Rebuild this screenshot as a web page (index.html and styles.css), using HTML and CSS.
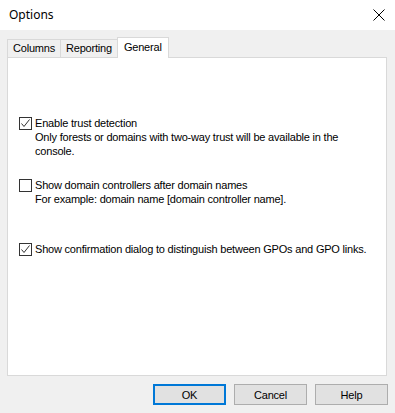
FILE: index.html
```html
<!DOCTYPE html>
<html lang="en">
<head>
    <meta charset="UTF-8">
    <title>Options</title>
    <link rel="stylesheet" href="styles.css">
</head>
<body>
<div class="dialog">
    <!-- title bar -->
    <div class="titlebar">
        <span class="title">Options</span>
        <svg class="close" width="12" height="12" viewBox="0 0 12 12">
            <path d="M0.5 0.5 L11.5 11.5 M11.5 0.5 L0.5 11.5" stroke="#000" stroke-width="1" fill="none"/>
        </svg>
    </div>

    <!-- tabs -->
    <div class="tabs">
        <div class="tab">Columns</div>
        <div class="tab">Reporting</div>
        <div class="tab active">General</div>
    </div>

    <div class="panel">
        <div class="option first">
            <span class="check checked">
                <svg width="11" height="11" viewBox="0 0 11 11"><path d="M1.5 5.5 L4 8.5 L9.5 1.5" stroke="#333" stroke-width="1" fill="none"/></svg>
            </span>
            <div class="label">
                Enable trust detection<br>
                Only forests or domains with two-way trust will be available in the console.
            </div>
        </div>
        <div class="option second">
            <span class="check"></span>
            <div class="label">
                Show domain controllers after domain names<br>
                For example: domain name [domain controller name].
            </div>
        </div>
        <div class="option third">
            <span class="check checked">
                <svg width="11" height="11" viewBox="0 0 11 11"><path d="M1.5 5.5 L4 8.5 L9.5 1.5" stroke="#333" stroke-width="1" fill="none"/></svg>
            </span>
            <div class="label">Show confirmation dialog to distinguish between GPOs and GPO links.</div>
        </div>
    </div>

    <!-- buttons -->
    <div class="buttons">
        <button class="default">OK</button>
        <button>Cancel</button>
        <button>Help</button>
    </div>
</div>
</body>
</html>
```

FILE: styles.css
```css
body {
    margin: 0;
    background-color: #f0f0f0;
    font-family: "Liberation Sans", Arial, sans-serif;
    font-size: 11px;
    letter-spacing: -0.2px;
    color: #000;
}
.dialog {
    width: 395px;
    height: 413px;
}
.titlebar {
    height: 30px;
    background-color: #fff;
    display: flex;
    align-items: center;
    justify-content: space-between;
    padding: 0 10px 0 9px;
    letter-spacing: 0;
}
.title {
    font-family: "Noto Sans", "Open Sans", sans-serif;
    font-size: 12px;
    margin-top: -1px;
}
.close {
    margin-top: -1px;
}
.tabs {
    display: flex;
    align-items: flex-end;
    height: 20px;
    margin-top: 7px;
    padding-left: 7px;
}
.tab {
    height: 17px;
    line-height: 17px;
    padding: 0 5px;
    border: 1px solid #d9d9d9;
    border-bottom: none;
    background-color: #f0f0f0;
    margin-left: -1px;
}
.tab:first-child {
    margin-left: 0;
}
.tab.active {
    height: 20px;
    line-height: 18px;
    background-color: #fff;
    padding: 0 6px;
    position: relative;
    z-index: 1;
    margin-bottom: -1px;
}
.panel {
    margin-left: 7px;
    width: 378px;
    height: 317px;
    border: 1px solid #d9d9d9;
    background-color: #fff;
}
.option {
    display: flex;
    align-items: flex-start;
    padding-left: 11px;
}
.option.first {
    margin-top: 58px;
}
.option.second {
    margin-top: 20px;
}
.option.third {
    margin-top: 36px;
}
.check {
    width: 11px;
    height: 11px;
    border: 1px solid #333;
    background-color: #fff;
    flex: none;
    margin-top: 1px;
    margin-right: 3px;
    display: flex;
}
.label {
    line-height: 14px;
    width: 335px;
}
.buttons {
    display: flex;
    justify-content: flex-end;
    gap: 8px;
    padding-right: 7px;
    margin-top: 8px;
}
.buttons button {
    width: 73px;
    height: 21px;
    padding: 0;
    font-family: "Liberation Sans", Arial, sans-serif;
    font-size: 11px;
    letter-spacing: -0.2px;
    color: #000;
    background-color: #e1e1e1;
    border: 1px solid #adadad;
}
.buttons button.default {
    border: 2px solid #0078d7;
}
```
